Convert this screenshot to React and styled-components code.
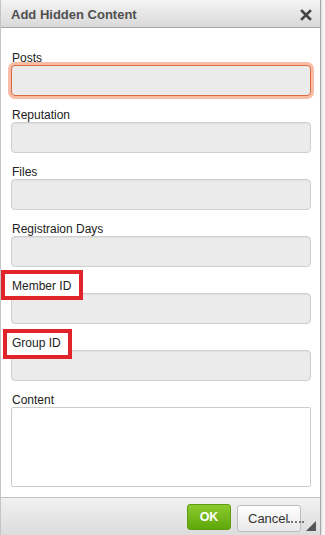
import React from "react";
import styled, { createGlobalStyle } from "styled-components";

const Global = createGlobalStyle`
  html, body { margin: 0; padding: 0; background: #fafafa; }
  body { font-family: "Liberation Sans", Arial, sans-serif; }
  * { box-sizing: border-box; }
`;

const Page = styled.div`
  display: flex;
  width: 325px;
  height: 535px;
  overflow: hidden;
  background: #f7f7f7;
`;

const Dialog = styled.div`
  width: 321px;
  height: 535px;
  display: flex;
  flex-direction: column;
  background: #fff;
  border-left: 1px solid #c4c4c4;
  border-right: 1px solid #a8a8a8;
  box-shadow: 1px 0 2px rgba(0,0,0,0.12);
  position: relative;
`;

const TitleBar = styled.div`
  height: 28px;
  flex: none;
  display: flex;
  align-items: center;
  justify-content: space-between;
  padding: 0 8px 0 10px;
  background: linear-gradient(#f4f4f4, #d9d9d9);
  border-bottom: 1px solid #a9a9a9;
`;

const Title = styled.div`
  font-size: 13px;
  font-weight: bold;
  color: #505050;
  padding-top: 1px;
`;

const Close = styled.svg`
  width: 12px;
  height: 12px;
  margin-top: 2px;
`;

const Body = styled.div`
  flex: 1;
  display: flex;
  flex-direction: column;
  gap: 12px;
  padding: 23px 10px 0 10px;
`;

const Field = styled.div`
  display: flex;
  flex-direction: column;
`;

const LabelWrap = styled.div`
  position: relative;
  height: 14px;
`;

const Label = styled.label`
  position: relative;
  z-index: 2;
  display: block;
  font-size: 12px;
  line-height: 14px;
  color: #222;
  padding-left: 1px;
`;

const Highlight = styled.span`
  position: absolute;
  z-index: 1;
  left: ${p => p.$left}px;
  top: ${p => p.$top}px;
  width: ${p => p.$width}px;
  height: ${p => p.$height}px;
  border: 4px solid #e1232b;
  background: #fff;
`;

const Input = styled.div`
  width: 300px;
  height: 31px;
  background: #ebebeb;
  border: 1px solid ${p => (p.$focus ? "#d96a43" : "#cfcfcf")};
  border-radius: 4px;
  box-shadow: ${p => (p.$focus ? "0 0 0 3px #f9bca4" : "inset 0 1px 1px rgba(0,0,0,0.04)")};
`;

const TextArea = styled.div`
  width: 300px;
  height: 80px;
  background: #fff;
  border: 1px solid #cdcdcd;
  border-radius: 2px;
`;

const Footer = styled.div`
  height: 38px;
  flex: none;
  display: flex;
  align-items: flex-start;
  justify-content: flex-end;
  gap: 6px;
  padding: 6px 19px 0 0;
  background: linear-gradient(#f1f1f1, #dcdcdc);
  border-top: 1px solid #c3c3c3;
  position: relative;
`;

const OkButton = styled.div`
  width: 44px;
  height: 26px;
  display: flex;
  align-items: center;
  justify-content: center;
  border: 1px solid #5f9d12;
  border-radius: 3px;
  background: linear-gradient(#8ccb2f, #5ea70b);
  color: #fff;
  font-size: 12.5px;
  font-weight: bold;
`;

const CancelButton = styled.div`
  width: 64px;
  height: 27px;
  margin-top: 1px;
  display: flex;
  align-items: center;
  padding-left: 10px;
  border: 1px solid #bdbdbd;
  border-radius: 3px;
  background: linear-gradient(#ffffff, #e8e8e8);
  color: #333;
  font-size: 13px;
  position: relative;
`;

const Watermark = styled.span`
  position: absolute;
  left: 50px;
  top: 15px;
  width: 16px;
  height: 0;
  border-top: 2px dotted #777;
`;

const Grip = styled.svg`
  position: absolute;
  right: 4px;
  bottom: 4px;
  width: 10px;
  height: 10px;
`;

const fields = [
  { label: "Posts", focus: true },
  { label: "Reputation" },
  { label: "Files" },
  { label: "Registraion Days" },
  { label: "Member ID", hl: { left: -10, top: -9, width: 82, height: 30 } },
  { label: "Group ID", hl: { left: -8, top: -7, width: 69, height: 30 } },
];

export default function App() {
  return (
    <>
      <Global />
      <Page>
        <Dialog>
          <TitleBar>
            <Title>Add Hidden Content</Title>
            <Close viewBox="0 0 12 12">
              <path d="M2 2 L10 10 M10 2 L2 10" stroke="#444" strokeWidth="2.6" strokeLinecap="square" />
            </Close>
          </TitleBar>
          <Body>
            {fields.map(f => (
              <Field key={f.label}>
                <LabelWrap>
                  {f.hl && (
                    <Highlight $left={f.hl.left} $top={f.hl.top} $width={f.hl.width} $height={f.hl.height} />
                  )}
                  <Label>{f.label}</Label>
                </LabelWrap>
                <Input $focus={f.focus} />
              </Field>
            ))}
            <Field>
              <LabelWrap>
                <Label>Content</Label>
              </LabelWrap>
              <TextArea />
            </Field>
          </Body>
          <Footer>
            <OkButton>OK</OkButton>
            <CancelButton>
              Cancel
              <Watermark />
            </CancelButton>
            <Grip viewBox="0 0 10 10">
              <path d="M10 0 L10 10 L0 10 Z" fill="#555" />
            </Grip>
          </Footer>
        </Dialog>
      </Page>
    </>
  );
}
